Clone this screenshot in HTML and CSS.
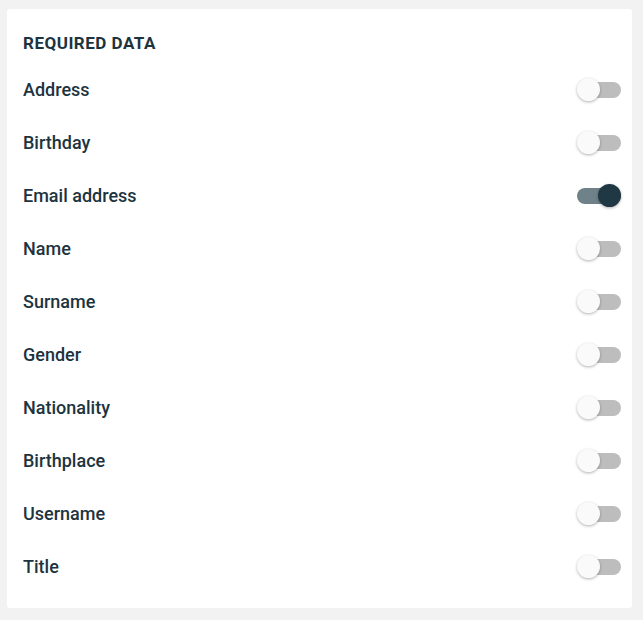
FILE: index.html
```html
<!DOCTYPE html>
<html>
<head>
<meta charset="utf-8">
<link rel="stylesheet" href="styles.css">
</head>
<body>
<div class="card">
  <h2 class="title">REQUIRED DATA</h2>
  <ul class="list">
    <li class="row"><span class="label">Address</span><span class="toggle"><span class="track"></span><span class="thumb"></span></span></li>
    <li class="row"><span class="label">Birthday</span><span class="toggle"><span class="track"></span><span class="thumb"></span></span></li>
    <li class="row"><span class="label">Email address</span><span class="toggle on"><span class="track"></span><span class="thumb"></span></span></li>
    <li class="row"><span class="label">Name</span><span class="toggle"><span class="track"></span><span class="thumb"></span></span></li>
    <li class="row"><span class="label">Surname</span><span class="toggle"><span class="track"></span><span class="thumb"></span></span></li>
    <li class="row"><span class="label">Gender</span><span class="toggle"><span class="track"></span><span class="thumb"></span></span></li>
    <li class="row"><span class="label">Nationality</span><span class="toggle"><span class="track"></span><span class="thumb"></span></span></li>
    <li class="row"><span class="label">Birthplace</span><span class="toggle"><span class="track"></span><span class="thumb"></span></span></li>
    <li class="row"><span class="label">Username</span><span class="toggle"><span class="track"></span><span class="thumb"></span></span></li>
    <li class="row"><span class="label">Title</span><span class="toggle"><span class="track"></span><span class="thumb"></span></span></li>
  </ul>
</div>
</body>
</html>
```
FILE: styles.css
```css
html, body {
  margin: 0;
  padding: 0;
  background: #f2f2f2;
}
body {
  padding: 9px 11px 12px 7px;
  font-family: Roboto, "Liberation Sans", sans-serif;
  color: #1d3440;
}
.card {
  background: #ffffff;
  border-radius: 3px;
  width: 625px;
  box-sizing: border-box;
  padding: 24px 11px 15px 16px;
}
.title {
  margin: 0 0 10px 0;
  font-size: 17px;
  line-height: 20px;
  font-weight: 700;
  letter-spacing: 0.5px;
}
.list {
  list-style: none;
  margin: 0;
  padding: 0;
}
.row {
  height: 53px;
  display: flex;
  align-items: center;
  justify-content: space-between;
}
.label {
  font-size: 18px;
  font-weight: 500;
}
.toggle {
  position: relative;
  width: 44px;
  height: 24px;
  display: block;
}
.track {
  position: absolute;
  left: 8px;
  right: 0;
  top: 4px;
  height: 16px;
  border-radius: 8px;
  background: #bdbdbd;
}
.thumb {
  position: absolute;
  left: 0;
  top: 0;
  width: 23px;
  height: 23px;
  border-radius: 50%;
  background: #fafafa;
  box-shadow: 0 1px 3px rgba(0,0,0,0.3);
}
.toggle.on .track {
  left: 0;
  background: #6f8189;
}
.toggle.on .thumb {
  left: 21px;
  background: #1f3844;
}
```
